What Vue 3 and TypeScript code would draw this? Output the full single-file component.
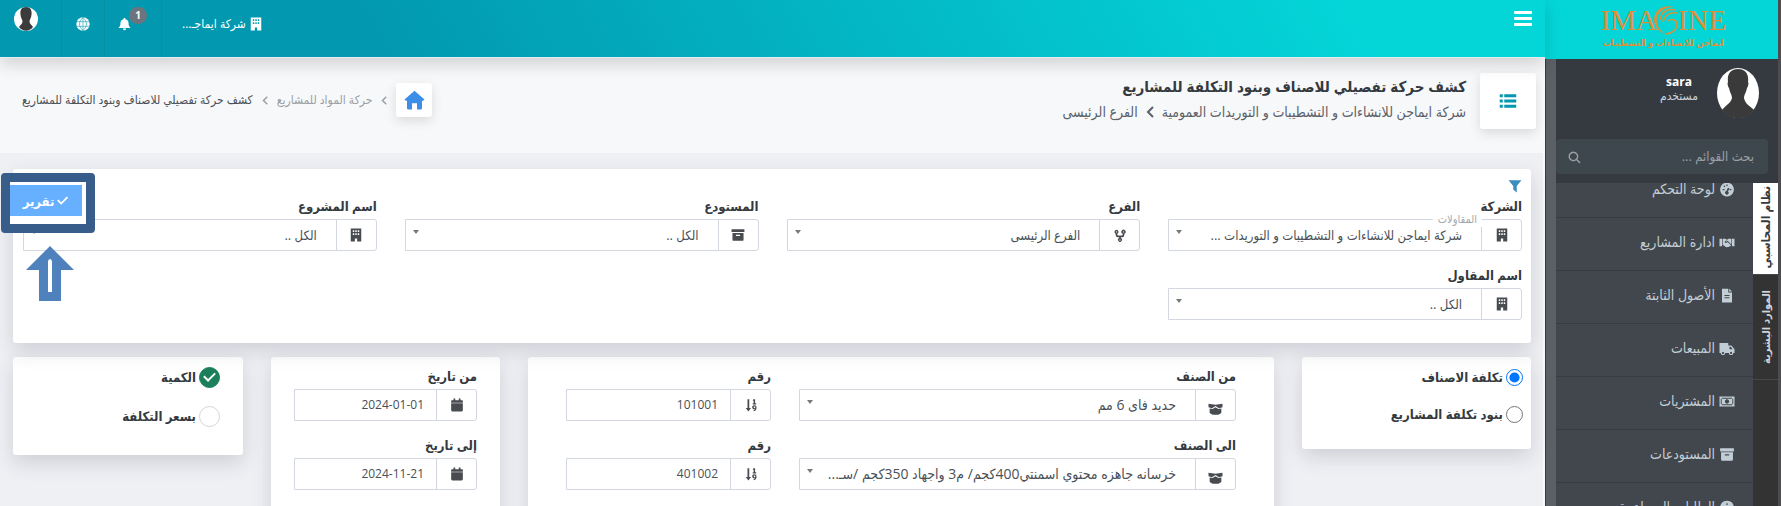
<script setup lang="ts">
import { ref } from 'vue'

interface Field {
  id: string
  label: string
  icon: string
  value: string
  floating?: string
}

const icons: Record<string, string> = {
  building: 'M3 1h18v22h-7v-5h-4v5H3zM6.500 4v3h2.500V4zm4.300 0v3h2.500V4zm4.200 0v3h2.500V4zM6.500 9v3h2.500V9zm4.300 0v3h2.500V9zm4.200 0v3h2.500V9z',
  archive: 'M1 2h22v5H1zM2.500 8.500h19V20a2 2 0 0 1-2 2h-15a2 2 0 0 1-2-2zM8.500 11.500v2h7v-2z',
  branch: 'M6 3a3.600 3.600 0 0 1 1.500 6.800V11a2 2 0 0 0 2 2h5a2 2 0 0 0 2-2V9.800a3.600 3.600 0 1 1 3 0V11a5 5 0 0 1-5 5h-1v1.200a3.400 3.400 0 1 1-3 0V16h-1a5 5 0 0 1-5-5V9.800A3.600 3.600 0 0 1 6 3zm0 2.600a1 1 0 1 0 .01 0zm12 0a1 1 0 1 0 .01 0zM12 19.500a1 1 0 1 0 .01 0z',
  box: 'M0 3l12 1.500L24 3v6l-6 1.500L12 7l-6 3.500L0 9zM2 11l5 1 5-3 5 3 5-1v8l-5 3H7l-5-3z',
  sort: 'M6 2h3v15h3l-4.500 6L3 17h3zM16 2h3v7h2v2h-6V9h1.500V4.500H15zM18 12.500a3.500 3.500 0 0 1 3.500 3.500c0 4-1 6-5 6.500v-2c1.300-.2 2-.6 2.300-1.300A3.500 3.500 0 1 1 18 12.500zm0 2.200a1.300 1.300 0 1 0 .01 0z',
  calendar: 'M6 1h3v3h6V1h3v3h3a1 1 0 0 1 1 1v3H2V5a1 1 0 0 1 1-1h3zM2 9h20v12a2 2 0 0 1-2 2H4a2 2 0 0 1-2-2z',
  gauge: 'M12 1a11 11 0 1 1-.01 0zM11 4v2.500h2V4zM5 11v2h3v-2zm11 0v2h3v-2zM6.200 6.500l2 2L9.500 7l-2-2zM13.500 9L11 14.500a2.800 2.800 0 1 0 2.600.6L16 10z',
  handshake: 'M0 6h4v12H0zM20 6h4v12h-4zM5 6h4l3 1-4 4c1 2 3 2 5 0l5 5c.600 1.500-.8 2.300-2 2-.7 1.500-2 1.600-3 1-2 1.200-3 .6-4-.5L5.500 16H5zM14 6h5v9l-6-6-2.500 1.800L10 10z',
  file: 'M4 1h10v6h6v16H4zM15.500 1L20 5.500h-4.500zM8 11v1.800h8V11zm0 3.700v1.800h8v-1.800z',
  truck: 'M0 3h14v4h5l5 6v6h-2a3.500 3.500 0 0 1-7 0H9a3.500 3.500 0 0 1-7 0H0zM16 9v4h5l-3-4zM5.500 17.300a1.700 1.700 0 1 0 .01 0zm13 0a1.700 1.700 0 1 0 .01 0z',
  money: 'M0 4h24v16H0zM4 6a2 2 0 0 1-2 2v8a2 2 0 0 1 2 2h16a2 2 0 0 1 2-2V8a2 2 0 0 1-2-2zM3.500 7.500h17v9h-17zM12 8.500a3.500 3.500 0 1 0 .01 0z',
  info: 'M12 1a11 11 0 1 1-.01 0zM11 5v3h2V5zm-1 5v2h1v6h3v-8z',
  filter: 'M1 2h22l-8 10v11l-6-5v-6z',
  search: 'M10 1a9 9 0 0 1 7.200 14.400l6 6-1.900 1.900-6-6A9 9 0 1 1 10 1zm0 2.600a6.400 6.400 0 1 0 .01 0z',
  bell: 'M10.500 1h3v2a7.500 7.500 0 0 1 6 7.500c0 4 1 6 3 7.500v1.500h-21V18c2-1.500 3-3.500 3-7.500a7.500 7.500 0 0 1 6-7.500zM9 20.500h6a3 3 0 0 1-6 0z',
  home: 'M12 1l12 10.500-1.500 1.500H21v9a1.500 1.500 0 0 1-1.500 1.500H15V16H9v7.500H4.500A1.500 1.500 0 0 1 3 22v-9H1.500L0 11.500z',
  check: 'M2 12.500L4.500 10l5 5L20 4.500 22.500 7l-13 13z',
  list: 'M1 3h4v4H1zM7 3h16v4H7zM1 10h4v4H1zM7 10h16v4H7zM1 17h4v4H1zM7 17h16v4H7z',
}

const menu = [
  { text: 'لوحة التحكم', icon: 'gauge' },
  { text: 'ادارة المشاريع', icon: 'handshake' },
  { text: 'الأصول الثابتة', icon: 'file' },
  { text: 'المبيعات', icon: 'truck' },
  { text: 'المشتريات', icon: 'money' },
  { text: 'المستودعات', icon: 'archive' },
  { text: 'الطلبات المساعدة', icon: 'info' },
]

const filters: Field[] = [
  { id: 'company', label: 'الشركة', icon: 'building', value: 'شركة ايماجن للانشاءات و التشطيبات و التوريدات ...', floating: 'المقاولات' },
  { id: 'branch', label: 'الفرع', icon: 'branch', value: 'الفرع الرئيسى' },
  { id: 'store', label: 'المستودع', icon: 'archive', value: 'الكل ..' },
  { id: 'project', label: 'اسم المشروع', icon: 'building', value: 'الكل ..' },
  { id: 'contractor', label: 'اسم المقاول', icon: 'building', value: 'الكل ..' },
]

const items = [
  { id: 'from', label: 'من الصنف', value: 'حديد فاى 6 مم', number: '101001' },
  { id: 'to', label: 'الى الصنف', value: 'خرسانه جاهزه محتوي اسمنتي400كجم/ م3 واجهاد 350كجم /سـ...', number: '401002' },
]

const dates = ref([
  { id: 'date-from', label: 'من تاريخ', value: '2024-01-01' },
  { id: 'date-to', label: 'إلى تاريخ', value: '2024-11-21' },
])

const mode = ref('items')
const byQuantity = ref(true)
const byCost = ref(false)
</script>

<template>
  <div class="app" dir="rtl">
    <aside class="sidebar">
      <a class="brand" href="#" aria-label="IMAGINE">
        <span class="brand-name">
          <span>IMA</span>
          <svg viewBox="0 0 26 30" class="swirl">
            <path d="M21 2C9-1 1 6 1 15c0 7 5 12 12 14C6 25 3 20 4 14 5 7 11 2 21 2z" />
            <path d="M23 5C14 3 8 7 7 15M24 8c-8-1-13 3-14 9M14 16c6-3 10-1 10 4 0 4-4 8-11 9" fill="none" stroke="currentColor" stroke-width="1.500" />
          </svg>
          <span>INE</span>
        </span>
        <span class="brand-sub">ايماجن للانشاءات و التشطيبات</span>
      </a>
      <div class="user">
        <svg viewBox="0 0 42 50" class="photo" preserveAspectRatio="none">
          <ellipse cx="21" cy="25" rx="21" ry="25" fill="#fff" />
          <path d="M21 1c8 0 11 6 10 13 1 1 0 5-1 6-1 5-3 7-3 10 1 6 6 8 10 12-8 11-24 11-32 0 4-5 9-7 10-12 0-3-2-5-3-10-1-1-2-5-1-6C10 7 13 1 21 1z" fill="#3a3a3b" />
        </svg>
        <div class="user-text">
          <strong>sara</strong>
          <span>مستخدم</span>
        </div>
      </div>
      <form class="search" @submit.prevent>
        <input type="search" aria-label="بحث القوائم" placeholder="بحث القوائم ..." />
        <button type="submit" aria-label="بحث"><svg viewBox="0 0 24 24"><path :d="icons.search" /></svg></button>
      </form>
      <div class="side-body">
        <div class="tabs">
          <button type="button" class="tab tab-on"><span>نظام المحاسبي</span></button>
          <button type="button" class="tab"><span>الموارد البشرية</span></button>
        </div>
        <nav class="menu">
          <a v-for="m in menu" :key="m.text" href="#">
            <svg viewBox="0 0 24 24" fill-rule="evenodd"><path :d="icons[m.icon]" /></svg>
            <span>{{ m.text }}</span>
          </a>
        </nav>
      </div>
      <div class="scroll-strip"></div>
    </aside>

    <div class="page">
      <header class="topbar">
        <button type="button" class="burger" aria-label="القائمة"><i></i><i></i><i></i></button>
        <div class="top-items">
          <a href="#" class="cell company">
            <svg viewBox="0 0 24 24" fill-rule="evenodd"><path :d="icons.building" /></svg>
            <span>شركة ايماجـ...</span>
          </a>
          <button type="button" class="cell bell" aria-label="التنبيهات">
            <svg viewBox="0 0 24 24"><path :d="icons.bell" /></svg>
            <span class="badge">1</span>
          </button>
          <button type="button" class="cell globe" aria-label="اللغة">
            <svg viewBox="0 0 24 24">
              <circle cx="12" cy="12" r="11.500" />
              <path d="M12 0v24M1 8h22M1 16h22M12 1C4 8 4 16 12 23M12 1c8 7 8 15 0 22" fill="none" stroke="#0299ae" stroke-width="1" />
            </svg>
          </button>
          <button type="button" class="cell me" aria-label="الحساب">
            <svg viewBox="0 0 24 24">
              <circle cx="12" cy="12" r="12" fill="#fff" />
              <path d="M12 0c5 0 6 4 5.500 7.500 0 3-2 5-2 7 0 2.500 2 3 3.500 5.500-4 5-10 5-14 0 1.500-2.500 3.500-3 3.500-5.500 0-2-2-4-2-7C6 4 7 0 12 0z" fill="#3b3b3c" />
            </svg>
          </button>
        </div>
      </header>

      <section class="heading">
        <div class="heading-icon"><svg viewBox="0 0 24 24"><path :d="icons.list" /></svg></div>
        <div class="heading-text">
          <h1>كشف حركة تفصيلي للاصناف وبنود التكلفة للمشاريع</h1>
          <p>
            <span>شركة ايماجن للانشاءات و التشطيبات و التوريدات العمومية</span>
            <svg viewBox="0 0 8 12" class="chev"><path d="M7 1L2 6l5 5" /></svg>
            <span>الفرع الرئيسى</span>
          </p>
        </div>
        <nav class="crumbs">
          <a href="#" class="home" aria-label="الرئيسية"><svg viewBox="0 0 24 24"><path :d="icons.home" /></svg></a>
          <svg viewBox="0 0 8 12" class="chev"><path d="M7 1L2 6l5 5" /></svg>
          <a href="#">حركة المواد للمشاريع</a>
          <svg viewBox="0 0 8 12" class="chev"><path d="M7 1L2 6l5 5" /></svg>
          <span class="current">كشف حركة تفصيلي للاصناف وبنود التكلفة للمشاريع</span>
        </nav>
      </section>

      <main class="content">
        <section class="card filters">
          <svg class="funnel" viewBox="0 0 24 24"><path :d="icons.filter" /></svg>
          <div class="filter-grid">
            <div v-for="f in filters" :key="f.id" class="field">
              <label :for="f.id">{{ f.label }}</label>
              <div class="group">
                <span class="addon"><svg viewBox="0 0 24 24" fill-rule="evenodd"><path :d="icons[f.icon]" /></svg></span>
                <div class="select">
                  <select :id="f.id"><option>{{ f.value }}</option></select>
                </div>
                <span v-if="f.floating" class="floating">{{ f.floating }}</span>
              </div>
            </div>
          </div>
          <div class="callout">
            <button type="button" class="report">
              <svg viewBox="0 0 24 24"><path :d="icons.check" /></svg>
              <span>تقرير</span>
            </button>
          </div>
          <svg class="arrow" viewBox="0 0 48 55">
            <path d="M24 0L48 24H35V55H13V24H0z" fill="#4f81bd" />
            <path d="M22 15q2-4 4 0V46H22z" fill="#fff" />
          </svg>
        </section>

        <div class="row">
          <section class="card modes">
            <label><input v-model="mode" type="radio" name="mode" value="items" /><span>تكلفة الاصناف</span></label>
            <label><input v-model="mode" type="radio" name="mode" value="projects" /><span>بنود تكلفة المشاريع</span></label>
          </section>

          <section class="card items">
            <template v-for="i in items" :key="i.id">
              <div class="field">
                <label :for="'item-' + i.id">{{ i.label }}</label>
                <div class="group">
                  <span class="addon low"><svg viewBox="0 0 24 24"><path :d="icons.box" /></svg></span>
                  <div class="select">
                    <select :id="'item-' + i.id"><option>{{ i.value }}</option></select>
                  </div>
                </div>
              </div>
              <div class="field">
                <label :for="'number-' + i.id">رقم</label>
                <div class="group">
                  <span class="addon"><svg viewBox="0 0 24 24" fill-rule="evenodd"><path :d="icons.sort" /></svg></span>
                  <input :id="'number-' + i.id" type="text" :value="i.number" />
                </div>
              </div>
            </template>
          </section>

          <section class="card dates">
            <div v-for="d in dates" :key="d.id" class="field">
              <label :for="d.id">{{ d.label }}</label>
              <div class="group">
                <span class="addon"><svg viewBox="0 0 24 24"><path :d="icons.calendar" /></svg></span>
                <input :id="d.id" v-model="d.value" type="text" />
              </div>
            </div>
          </section>

          <section class="card checks">
            <label><input v-model="byQuantity" type="checkbox" /><span>الكمية</span></label>
            <label><input v-model="byCost" type="checkbox" /><span>بسعر التكلفة</span></label>
          </section>
        </div>
      </main>
    </div>
  </div>
</template>

<style>
body {
  margin: 0;
  background: #eff0f4;
}
</style>

<style scoped>
* {
  box-sizing: border-box;
}
.app {
  display: flex;
  height: 100vh;
  overflow: hidden;
  font-family: "Open Sans", "DejaVu Sans Condensed", "DejaVu Sans", sans-serif;
  font-size: 12px;
  line-height: 20px;
  color: #495057;
  background: #eff0f4;
}
button,
input,
select {
  font: inherit;
  color: inherit;
  border: 0;
  background: none;
  margin: 0;
  padding: 0;
}
a {
  color: inherit;
  text-decoration: none;
}
svg {
  fill: currentColor;
  flex: none;
}

/* sidebar */
.sidebar {
  position: relative;
  width: 236px;
  flex: none;
  display: flex;
  flex-direction: column;
  background: #343a40;
  border-right: 3px solid #4d4d4f;
}
.brand {
  height: 59px;
  flex: none;
  padding: 5px 0 0 4px;
  background: #04d6d8;
  color: #d9923b;
  display: flex;
  flex-direction: column;
  align-items: center;
}
.brand-name {
  direction: ltr;
  display: flex;
  align-items: center;
  height: 30px;
  font-family: "Liberation Serif", serif;
  font-size: 29px;
}
.swirl {
  width: 26px;
  height: 30px;
  margin: 0 -1px 0 -4px;
}
.brand-sub {
  font-size: 9px;
  line-height: 16px;
  font-weight: 600;
  white-space: nowrap;
}
.user {
  display: flex;
  align-items: flex-start;
  gap: 19px;
  height: 80px;
  flex: none;
  padding: 9px 19px 0 0;
}
.photo {
  width: 42px;
  height: 50px;
}
.user-text {
  display: flex;
  flex-direction: column;
  align-items: center;
  padding-top: 7px;
  line-height: 14px;
  color: #ced4da;
}
.user-text strong {
  color: #fff;
}
.search {
  display: flex;
  flex: none;
  height: 35px;
  margin: 0 10px 9px 11px;
  background: #3f474e;
  border-radius: 4px;
  color: #9aa1a6;
}
.search input {
  flex: 1;
  min-width: 0;
  padding: 0 14px 2px;
  font-size: 13px;
  outline: 0;
}
.search input::placeholder {
  color: #9a9fa3;
}
.search button {
  width: 36px;
}
.search svg {
  width: 13px;
  height: 13px;
  vertical-align: middle;
}
.side-body {
  flex: 1;
  min-height: 0;
  display: flex;
  overflow: hidden;
  background: #42474d;
}
.tabs {
  width: 25px;
  flex: none;
  background: #333;
  display: flex;
  flex-direction: column;
  font-size: 11px;
  font-weight: 600;
  color: #ced4da;
}
.tab {
  height: 105px;
  flex: none;
  padding: 0;
  display: flex;
  align-items: center;
  justify-content: center;
  border-bottom: 1px solid #474747;
}
.tab span {
  writing-mode: vertical-rl;
  transform: rotate(180deg);
  white-space: nowrap;
}
.tab-on {
  height: 92px;
  padding-bottom: 2px;
  font-size: 12px;
  background: #fff;
  color: #343a40;
}
.menu {
  flex: 1;
  margin-top: -18px;
  font-size: 14px;
  color: #c2ced6;
}
.menu a {
  display: flex;
  align-items: center;
  gap: 4px;
  height: 53px;
  padding: 0 18px 4px 0;
  border-bottom: 1px solid #373c41;
}
.menu svg {
  width: 16px;
  height: 15px;
}
.scroll-strip {
  position: absolute;
  left: 0;
  top: 59px;
  bottom: 0;
  width: 11px;
  background: #5b6067;
  border-left: 1px solid #343a40;
}

/* top bar */
.page {
  flex: 1;
  min-width: 0;
  display: flex;
  flex-direction: column;
  border-right: 2px solid #f8f9fa;
}
.topbar {
  position: relative;
  z-index: 1;
  height: 58px;
  flex: none;
  margin-right: -2px;
  display: flex;
  justify-content: space-between;
  align-items: flex-start;
  color: #fff;
  background: linear-gradient(60deg, #0299b0 25%, #04d6d8 88%);
  border-bottom: 1px solid #e4eef0;
  box-shadow: 0 6px 16px rgba(0, 0, 0, 0.16);
}
.burger {
  display: flex;
  flex-direction: column;
  gap: 3px;
  width: 44px;
  padding: 11px 13px 0;
}
.burger i {
  height: 3px;
  border-radius: 1px;
  background: #fff;
}
.top-items {
  display: flex;
  height: 57px;
}
.cell {
  position: relative;
  height: 57px;
  padding: 0 0 10px;
  display: flex;
  align-items: center;
  justify-content: center;
}
.bell,
.globe,
.me {
  border-right: 1px solid #0c8da1;
}
.company {
  gap: 3px;
  padding-left: 20px;
}
.company svg {
  width: 14px;
  height: 14px;
}
.bell {
  width: 57px;
  padding-right: 18px;
}
.bell svg {
  width: 13px;
  height: 14px;
}
.badge {
  position: absolute;
  top: 7px;
  right: 14px;
  width: 18px;
  height: 17px;
  border-radius: 9px;
  background: #6c757d;
  font-size: 10px;
  line-height: 16px;
  font-weight: 700;
}
.globe {
  width: 43px;
}
.globe svg {
  width: 14px;
  height: 14px;
}
.me {
  width: 62px;
  padding: 0 9px 19px 0;
}
.me svg {
  width: 24px;
  height: 24px;
}

/* heading */
.heading {
  display: flex;
  align-items: flex-start;
  height: 95px;
  flex: none;
  padding: 15px 7px 0 22px;
  background: #f7f8fa;
  color: #5b6168;
  white-space: nowrap;
}
.heading-icon,
.home {
  background: #fff;
  border-radius: 3px;
  box-shadow: 0 4px 12px rgba(0, 0, 0, 0.12);
  display: flex;
  align-items: center;
  justify-content: center;
}
.heading-icon {
  width: 56px;
  height: 56px;
  color: #0299b0;
}
.heading-icon svg {
  width: 20px;
  height: 18px;
}
.heading-text {
  margin-right: 14px;
}
h1 {
  margin: 0;
  font-size: 15px;
  line-height: 26px;
  color: #343a40;
}
.heading-text p {
  margin: 0;
  display: flex;
  align-items: center;
  gap: 8px;
  font-size: 14px;
  line-height: 26px;
}
.chev {
  width: 8px;
  height: 12px;
  fill: none;
  stroke: currentColor;
  stroke-width: 2;
}
.crumbs {
  margin-right: auto;
  margin-top: 10px;
  display: flex;
  align-items: center;
  gap: 9px;
  font-size: 12px;
  color: #9a9ea3;
}
.crumbs .chev {
  width: 6px;
  height: 9px;
}
.crumbs .current {
  color: #495057;
}
.home {
  width: 36px;
  height: 34px;
  color: #3d8ee8;
}
.home svg {
  width: 21px;
  height: 20px;
}

/* cards */
.content {
  flex: 1;
  padding: 16px 12px 0 13px;
}
.card {
  background: #fff;
  border-radius: 3px;
  box-shadow: 0 8px 20px rgba(40, 44, 60, 0.16);
}
.filters {
  position: relative;
  padding: 10px 9px 23px 10px;
}
.funnel {
  display: block;
  width: 14px;
  height: 14px;
  color: #3a8dbd;
}
.filter-grid {
  display: grid;
  grid-template-columns: repeat(4, minmax(0, 1fr));
  gap: 15px 28px;
  margin-top: 4px;
}
.field > label {
  display: block;
  height: 22px;
  font-size: 13px;
  line-height: 18px;
  font-weight: 700;
  color: #343a40;
}
.group {
  position: relative;
  display: flex;
  height: 32px;
  border: 1px solid #d3d7e0;
  border-radius: 0 3px 3px 0;
  background: #fff;
}
.addon {
  width: 40px;
  flex: none;
  display: flex;
  align-items: center;
  justify-content: center;
  border-left: 1px solid #d3d7e0;
  color: #484b50;
}
.addon svg {
  width: 14px;
  height: 14px;
}
.addon.low {
  padding-top: 7px;
}
.addon.low svg {
  width: 15px;
}
.select {
  position: relative;
  flex: 1;
  min-width: 0;
}
.select::after {
  content: "";
  position: absolute;
  left: 7px;
  top: 10px;
  border: 3px solid transparent;
  border-top: 4px solid #77797d;
  border-bottom: 0;
}
.select select {
  appearance: none;
  width: 100%;
  height: 100%;
  padding: 0 19px 0 20px;
  font-size: 13px;
}
.items .select select {
  font-size: 14px;
}
.group > input {
  flex: 1;
  min-width: 0;
  padding: 0 12px;
}
.floating {
  position: absolute;
  top: -9px;
  right: 39px;
  height: 16px;
  padding: 0 5px;
  background: #fff;
  font-size: 11px;
  line-height: 15px;
  color: #a3a6aa;
}
.callout {
  position: absolute;
  left: -12px;
  top: 4px;
  width: 94px;
  height: 60px;
  padding: 0 4px 5px 0;
  display: flex;
  align-items: center;
  border: 9px solid #385d8a;
  border-radius: 4px;
  background: #fff;
}
.report {
  flex: 1;
  height: 31px;
  display: flex;
  align-items: center;
  justify-content: center;
  gap: 2px;
  background: #66b0ff;
  color: #fff;
  font-size: 13px;
  font-weight: 700;
}
.report svg {
  width: 13px;
  height: 13px;
}
.arrow {
  position: absolute;
  left: 13px;
  top: 77px;
  width: 48px;
  height: 55px;
}
.row {
  display: grid;
  grid-template-columns: minmax(0, 229fr) minmax(0, 746fr) minmax(0, 229fr) minmax(0, 230fr);
  gap: 28px;
  align-items: start;
  margin-top: 14px;
}
.modes,
.checks {
  display: flex;
  flex-direction: column;
  gap: 17px;
  font-size: 13px;
  font-weight: 700;
  color: #343a40;
}
.modes {
  height: 92px;
  padding: 10px 8px 0;
}
.modes label,
.checks label {
  display: flex;
  align-items: center;
  gap: 3px;
}
.modes input {
  width: 17px;
  height: 17px;
  accent-color: #0075ff;
}
.checks {
  height: 98px;
  padding: 9px 23px 0;
}
.checks label {
  height: 22px;
}
.checks input {
  appearance: none;
  width: 21px;
  height: 21px;
  border: 1px solid #d5d5d2;
  border-radius: 50%;
  display: flex;
  align-items: center;
  justify-content: center;
}
.checks input:checked {
  background: #1b7f5c;
  border-color: #1b7f5c;
}
.checks input:checked::after {
  content: "";
  width: 9px;
  height: 5px;
  margin-bottom: 3px;
  border: solid #fff;
  border-width: 0 0 2px 2px;
  transform: rotate(-45deg);
}
.items {
  display: grid;
  grid-template-columns: minmax(0, 437fr) minmax(0, 205fr);
  gap: 15px 28px;
  padding: 10px 38px 40px;
}
.dates {
  display: grid;
  grid-template-columns: minmax(0, 1fr);
  gap: 15px;
  padding: 10px 23px 40px;
}
</style>
